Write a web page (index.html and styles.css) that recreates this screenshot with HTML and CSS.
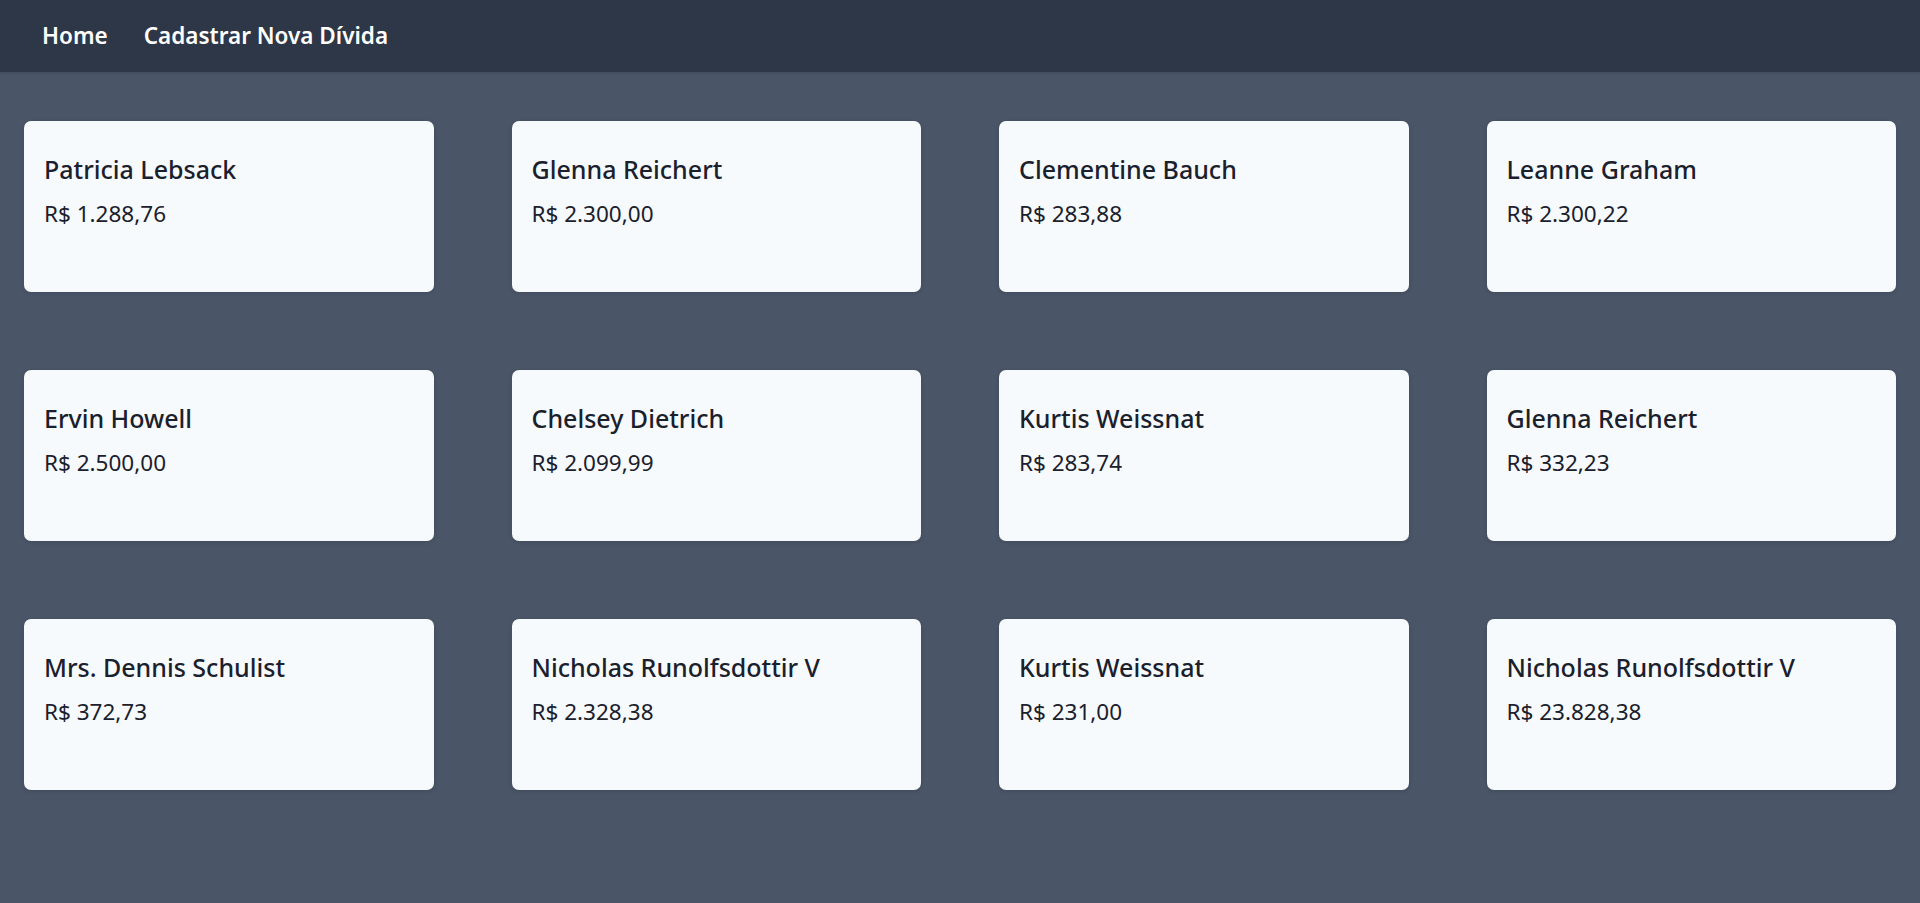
FILE: index.html
```html
<!DOCTYPE html>
<html lang="pt-BR">
<head>
<meta charset="utf-8">
<title>Dívidas</title>
<link rel="stylesheet" href="styles.css">
</head>
<body>
<nav class="navbar">
  <a class="nav-link" href="#">Home</a>
  <a class="nav-link" href="#">Cadastrar Nova Dívida</a>
</nav>
<main class="content">
  <div class="grid">
    <div class="card"><h2 class="card-title">Patricia Lebsack</h2><p class="card-value">R$ 1.288,76</p></div>
    <div class="card"><h2 class="card-title">Glenna Reichert</h2><p class="card-value">R$ 2.300,00</p></div>
    <div class="card"><h2 class="card-title">Clementine Bauch</h2><p class="card-value">R$ 283,88</p></div>
    <div class="card"><h2 class="card-title">Leanne Graham</h2><p class="card-value">R$ 2.300,22</p></div>
    <div class="card"><h2 class="card-title">Ervin Howell</h2><p class="card-value">R$ 2.500,00</p></div>
    <div class="card"><h2 class="card-title">Chelsey Dietrich</h2><p class="card-value">R$ 2.099,99</p></div>
    <div class="card"><h2 class="card-title">Kurtis Weissnat</h2><p class="card-value">R$ 283,74</p></div>
    <div class="card"><h2 class="card-title">Glenna Reichert</h2><p class="card-value">R$ 332,23</p></div>
    <div class="card"><h2 class="card-title">Mrs. Dennis Schulist</h2><p class="card-value">R$ 372,73</p></div>
    <div class="card"><h2 class="card-title">Nicholas Runolfsdottir V</h2><p class="card-value">R$ 2.328,38</p></div>
    <div class="card"><h2 class="card-title">Kurtis Weissnat</h2><p class="card-value">R$ 231,00</p></div>
    <div class="card"><h2 class="card-title">Nicholas Runolfsdottir V</h2><p class="card-value">R$ 23.828,38</p></div>
  </div>
</main>
</body>
</html>
```
FILE: styles.css
```css
* { box-sizing: border-box; }
html, body {
  margin: 0;
  padding: 0;
  height: 100%;
}
body {
  background: #4a5568;
  font-family: "Noto Sans", "Open Sans", sans-serif;
  color: #1a202c;
}
.navbar {
  height: 72px;
  background: #2d3748;
  display: flex;
  align-items: center;
  gap: 36px;
  padding: 0 0 0 42px;
  box-shadow: 0 1px 3px rgba(0,0,0,0.12);
}
.nav-link {
  color: #ffffff;
  text-decoration: none;
  font-size: 22.5px;
  font-weight: 600;
  line-height: 1;
}
.content {
  padding: 49px 24px;
}
.grid {
  display: grid;
  grid-template-columns: repeat(4, 1fr);
  column-gap: 78px;
  row-gap: 78px;
}
.card {
  height: 171px;
  background: #f7fafc;
  border-radius: 7px;
  padding: 30px 20px;
  box-shadow: 0 1px 4px rgba(0,0,0,0.14);
}
.card-title {
  margin: 0;
  font-size: 25px;
  font-weight: 500;
  line-height: 37px;
  color: #1a202c;
}
.card-value {
  margin: 9px 0 0;
  font-size: 22.5px;
  font-weight: 400;
  line-height: 34px;
  color: #1a202c;
}
```
